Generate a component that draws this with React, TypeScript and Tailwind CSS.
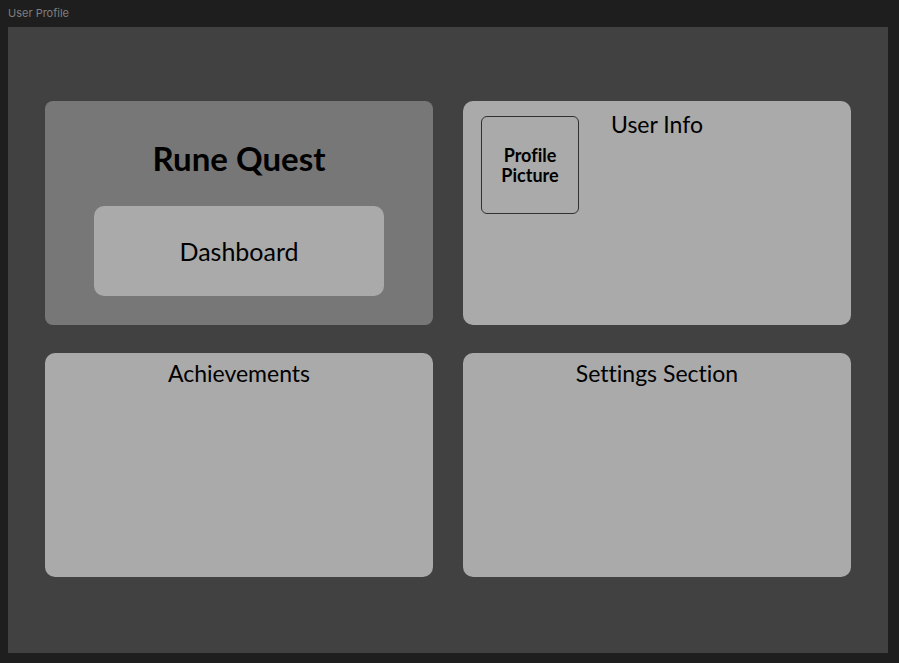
import type { ReactNode } from "react";

function Panel({ title, children }: { title: string; children?: ReactNode }) {
  return (
    <section
      className={`grid min-h-56 grid-cols-[1fr_auto_1fr] items-start rounded-[10px] bg-[#aaaaaa] px-[18px] ${
        children ? "pt-[7px]" : "pt-1"
      }`}
    >
      <div className="pt-2">{children}</div>
      <h2 className="text-center text-[23px] leading-8">{title}</h2>
    </section>
  );
}

export default function App() {
  return (
    <div className="flex min-h-screen flex-col bg-[#1e1e1e] pr-[11px] pb-[10px] pl-2 font-['Lato',sans-serif] text-black [font-variant-ligatures:none]">
      <header className="flex h-[27px] items-center pb-[2px] font-['Inter',sans-serif] text-[11px] leading-4 text-[#7f7f7f]">
        User Profile
      </header>
      <main className="grid flex-1 grid-cols-2 content-start gap-x-[30px] gap-y-7 bg-[#414141] px-[37px] py-[74px]">
        <section className="flex min-h-56 flex-col items-center rounded-lg bg-[#777777] px-[49px] pt-[35px]">
          <h1 className="text-[33px] leading-[44px] font-bold">Rune Quest</h1>
          <button
            type="button"
            className="mt-[26px] h-[90px] w-full rounded-[10px] bg-[#aaaaaa] text-[25px] leading-8"
          >
            Dashboard
          </button>
        </section>
        <Panel title="User Info">
          <div className="flex size-[98px] items-center justify-center rounded-md border border-[#303030] text-center text-[18px] leading-5 font-bold">
            Profile
            <br />
            Picture
          </div>
        </Panel>
        <Panel title="Achievements" />
        <Panel title="Settings Section" />
      </main>
    </div>
  );
}
